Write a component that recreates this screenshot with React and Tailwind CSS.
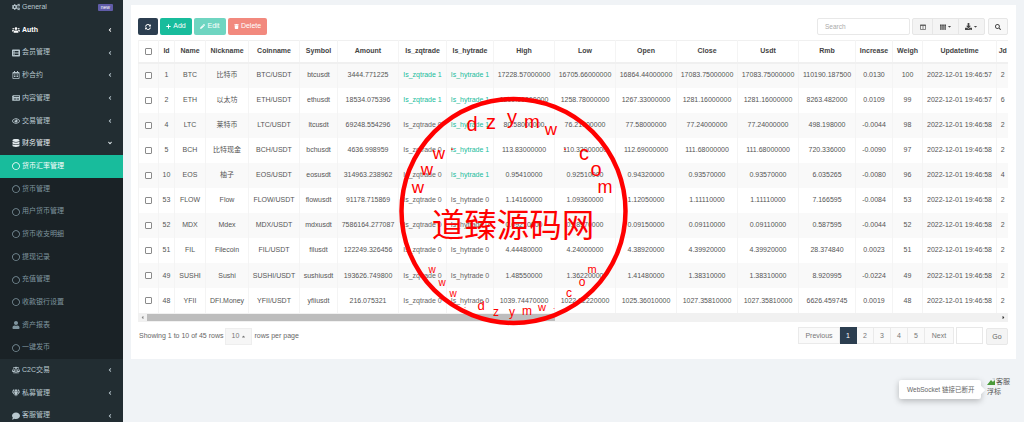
import React from 'react';
import {
  FaCogs, FaUsers, FaListAlt, FaRegCalendarAlt, FaNewspaper, FaRegEye, FaDatabase, FaRegCircle, FaUser,
  FaBalanceScale, FaGem, FaComment, FaAngleLeft, FaAngleDown, FaSyncAlt, FaPlus, FaPencilAlt, FaTrash,
  FaColumns, FaTh, FaDownload, FaSearch, FaCaretDown, FaCaretUp, FaCaretLeft, FaCaretRight,
} from 'react-icons/fa';

const font = { fontFamily: '"Liberation Sans", "Noto Sans CJK SC", sans-serif' };

const topMenu = [
  { icon: FaCogs, label: 'General', badge: 'new' },
  { icon: FaUsers, label: 'Auth', arrow: true, bold: true },
  { icon: FaListAlt, label: '会员管理', arrow: true },
  { icon: FaRegCalendarAlt, label: '秒合约', arrow: true },
  { icon: FaNewspaper, label: '内容管理', arrow: true },
  { icon: FaRegEye, label: '交易管理', arrow: true },
  { icon: FaDatabase, label: '财务管理', open: true, bright: true },
];

const subMenu = [
  { icon: FaRegCircle, label: '货币汇率管理', active: true },
  { icon: FaRegCircle, label: '货币管理' },
  { icon: FaRegCircle, label: '用户货币管理' },
  { icon: FaRegCircle, label: '货币收支明细' },
  { icon: FaRegCircle, label: '提现记录' },
  { icon: FaRegCircle, label: '充值管理' },
  { icon: FaRegCircle, label: '收款银行设置' },
  { icon: FaUser, label: '资产报表' },
  { icon: FaRegCircle, label: '一键发币' },
];

const bottomMenu = [
  { icon: FaBalanceScale, label: 'C2C交易', arrow: true },
  { icon: FaGem, label: '私募管理', arrow: true },
  { icon: FaComment, label: '客服管理', arrow: true },
];

const columns = [
  ['', 20], ['Id', 16], ['Name', 31], ['Nickname', 43], ['Coinname', 51], ['Symbol', 38], ['Amount', 61],
  ['Is_zqtrade', 48], ['Is_hytrade', 47], ['High', 61], ['Low', 61], ['Open', 61], ['Close', 61], ['Usdt', 61],
  ['Rmb', 57], ['Increase', 37], ['Weigh', 30], ['Updatetime', 74], ['Jd', 12],
];

const rows = [
  [1, 'BTC', '比特币', 'BTC/USDT', 'btcusdt', '3444.771225', 1, 1, '17228.57000000', '16705.66000000', '16864.44000000', '17083.75000000', '17083.75000000', '110190.187500', '0.0130', 100, '2022-12-01 19:46:57', 2],
  [2, 'ETH', '以太坊', 'ETH/USDT', 'ethusdt', '18534.075396', 1, 1, '1299.91000000', '1258.78000000', '1267.33000000', '1281.16000000', '1281.16000000', '8263.482000', '0.0109', 99, '2022-12-01 19:46:57', 6],
  [4, 'LTC', '莱特币', 'LTC/USDT', 'ltcusdt', '69248.554296', 0, 1, '80.58000000', '76.21000000', '77.58000000', '77.24000000', '77.24000000', '498.198000', '-0.0044', 98, '2022-12-01 19:46:58', 2],
  [5, 'BCH', '比特现金', 'BCH/USDT', 'bchusdt', '4636.998959', 0, 1, '113.83000000', '110.32000000', '112.69000000', '111.68000000', '111.68000000', '720.336000', '-0.0090', 97, '2022-12-01 19:46:58', 2],
  [10, 'EOS', '柚子', 'EOS/USDT', 'eosusdt', '314963.238962', 0, 1, '0.95410000', '0.92510000', '0.94320000', '0.93570000', '0.93570000', '6.035265', '-0.0080', 96, '2022-12-01 19:46:58', 4],
  [53, 'FLOW', 'Flow', 'FLOW/USDT', 'flowusdt', '91178.715869', 0, 0, '1.14160000', '1.09360000', '1.12050000', '1.11110000', '1.11110000', '7.166595', '-0.0084', 53, '2022-12-01 19:46:58', 2],
  [52, 'MDX', 'Mdex', 'MDX/USDT', 'mdxusdt', '7586164.277087', 0, 0, '0.09210000', '0.08970000', '0.09150000', '0.09110000', '0.09110000', '0.587595', '-0.0044', 52, '2022-12-01 19:46:58', 2],
  [51, 'FIL', 'Filecoin', 'FIL/USDT', 'filusdt', '122249.326456', 0, 0, '4.44480000', '4.24000000', '4.38920000', '4.39920000', '4.39920000', '28.374840', '0.0023', 51, '2022-12-01 19:46:58', 2],
  [49, 'SUSHI', 'Sushi', 'SUSHI/USDT', 'sushiusdt', '193626.749800', 0, 0, '1.48550000', '1.36220000', '1.41480000', '1.38310000', '1.38310000', '8.920995', '-0.0224', 49, '2022-12-01 19:46:58', 2],
  [48, 'YFII', 'DFI.Money', 'YFII/USDT', 'yfiiusdt', '216.075321', 0, 0, '1039.74470000', '1022.32220000', '1025.36010000', '1027.35810000', '1027.35810000', '6626.459745', '0.0019', 48, '2022-12-01 19:46:58', 2],
];

// stamp letters: [char, x, y, size], placed around the ring
const stampLetters = [
  ['w', 418, 193, 17], ['w', 427, 175, 17], ['w', 439, 159, 17], ['.', 452, 150, 15], ['d', 472, 131, 20],
  ['z', 491, 129, 20], ['y', 512, 124, 20], ['m', 532, 128, 19], ['w', 551, 135, 17], ['.', 565, 150, 15],
  ['c', 584, 160, 20], ['o', 596, 176, 20], ['m', 605, 193, 18],
  ['w', 432, 273, 10], ['w', 442, 286, 10], ['w', 453, 297, 10], ['.', 465, 308, 8], ['d', 481, 310, 13],
  ['z', 496, 316, 12], ['y', 512, 316, 12], ['m', 527, 315, 12], ['w', 542, 311, 11], ['.', 554, 309, 8],
  ['c', 569, 297, 12], ['o', 582, 286, 12], ['m', 592, 273, 11],
];

const MenuRow = ({ item }) => {
  const Icon = item.icon;
  return (
    <div
      className={`flex h-[22.7px] items-center pl-[10px] pr-[10px] text-[7px] ${
        item.active ? 'bg-[#18bc9c] text-white' : item.bright ? 'text-[#e4ecef]' : item.sub ? 'text-[#7f959f]' : 'text-[#b8c7ce]'
      } ${item.bold ? 'font-bold text-white' : ''}`}
    >
      <span className="flex w-[12px] justify-center">
        <Icon className="text-[8px]" />
      </span>
      <span className="flex-1 whitespace-nowrap">{item.label}</span>
      {item.badge && <span className="rounded-[1px] bg-[#605ca8] px-[3px] text-[5px] leading-[7px] text-white">{item.badge}</span>}
      {item.arrow && <FaAngleLeft className="text-[6px]" />}
      {item.open && <FaAngleDown className="text-[6px]" />}
    </div>
  );
};

const Check = () => <span className="mx-auto block h-[7px] w-[7px] rounded-[1px] border border-[#8a8a8a] bg-white" />;

const TradeCell = ({ name, on }) => (
  <span className={on ? 'text-[#18bc9c]' : 'text-[#666]'}>{name} {on}</span>
);

const Cell = ({ children }) => (
  <td className="overflow-hidden whitespace-nowrap border-l border-[#f4f4f4] p-0 text-center text-[7px] text-[#555]">{children}</td>
);

const PageBtn = ({ children, active }) => (
  <span
    className={`flex h-[17px] items-center justify-center border-y border-r text-[7px] first:border-l ${
      active ? 'w-[17px] border-[#2c3e50] bg-[#2c3e50] text-white' : 'border-[#eaeaea] bg-[#fafafa] text-[#777]'
    }`}
  >
    {children}
  </span>
);

export default function App() {
  return (
    <div style={font} className="relative flex h-[422px] w-[1024px] overflow-hidden bg-[#f0f3f6]">
      {/* sidebar */}
      <aside className="w-[123px] shrink-0 overflow-hidden bg-[#222d32]">
        <div className="-mt-[4px]">
          {topMenu.map((item) => <MenuRow key={item.label} item={item} />)}
          <div className="bg-[#1a2226]">
            {subMenu.map((item) => <MenuRow key={item.label} item={{ ...item, sub: true }} />)}
          </div>
          {bottomMenu.map((item) => <MenuRow key={item.label} item={item} />)}
        </div>
      </aside>

      {/* main */}
      <main className="flex-1 px-[8px] pt-[5px]">
        <section className="h-[354px] w-[885px] bg-white pl-[7px] pr-[8px] pt-[13px]">
          <div className="flex h-[17px] items-center">
            <button className="flex h-[17px] w-[20px] items-center justify-center rounded-[2px] bg-[#2c3e50] text-white">
              <FaSyncAlt className="text-[6px]" />
            </button>
            <button className="ml-[2px] flex h-[17px] w-[32px] items-center justify-center gap-[2px] rounded-[2px] bg-[#18bc9c] text-[7px] text-white">
              <FaPlus className="text-[5px]" />Add
            </button>
            <button className="ml-[2px] flex h-[17px] w-[32px] items-center justify-center gap-[2px] rounded-[2px] bg-[#6fd5c1] text-[7px] text-white">
              <FaPencilAlt className="text-[5px]" />Edit
            </button>
            <button className="ml-[2px] flex h-[17px] w-[39px] items-center justify-center gap-[2px] rounded-[2px] bg-[#f2897e] text-[7px] text-white">
              <FaTrash className="text-[5px]" />Delete
            </button>
            <div className="ml-auto flex h-[17px] w-[93px] items-center rounded-[2px] border border-[#e8e8e8] pl-[7px] text-[6.5px] text-[#aaa]">Search</div>
            <div className="ml-[2px] flex h-[17px] rounded-[2px] border border-[#e6e6e6] bg-[#f4f4f4] text-[#444]">
              <span className="flex w-[20px] items-center justify-center border-r border-[#e6e6e6]"><FaColumns className="text-[6px] text-[#666]" /></span>
              <span className="flex w-[26px] items-center justify-center gap-[1px] border-r border-[#e6e6e6]"><FaTh className="text-[6px]" /><FaCaretDown className="text-[5px]" /></span>
              <span className="flex w-[25px] items-center justify-center gap-[1px]"><FaDownload className="text-[7px]" /><FaCaretDown className="text-[5px]" /></span>
            </div>
            <span className="ml-[3px] flex h-[17px] w-[20px] items-center justify-center rounded-[2px] border border-[#e6e6e6] bg-[#f8f8f8] text-[#444]">
              <FaSearch className="text-[6px]" />
            </span>
          </div>

          <div className="mt-[5px] w-[870px] overflow-hidden">
            <table className="w-[870px] table-fixed border-collapse">
              <colgroup>
                {columns.map(([name, w]) => <col key={name} style={{ width: w }} />)}
              </colgroup>
              <thead>
                <tr className="h-[22px] border-b-2 border-t border-[#f0f0f0]">
                  {columns.map(([name]) => (
                    <th key={name} className="overflow-hidden whitespace-nowrap border-l border-[#f4f4f4] p-0 text-center text-[7px] font-bold text-[#444]">
                      {name || <Check />}
                    </th>
                  ))}
                </tr>
              </thead>
              <tbody>
                {rows.map((r, i) => (
                  <tr key={r[0]} className={`h-[25.1px] ${i % 2 === 0 ? 'bg-[#f9f9f9]' : 'bg-white'}`}>
                    <Cell><Check /></Cell>
                    {r.map((v, j) => (
                      <Cell key={j}>
                        {j === 6 ? <TradeCell name="Is_zqtrade" on={v} /> : j === 7 ? <TradeCell name="Is_hytrade" on={v} /> : v}
                      </Cell>
                    ))}
                  </tr>
                ))}
              </tbody>
            </table>
            {/* horizontal scrollbar */}
            <div className="flex h-[9px] items-center bg-[#f1f1f1]">
              <span className="flex w-[9px] justify-center text-[#888]"><FaCaretLeft className="text-[5px]" /></span>
              <span className="h-[7px] w-[408px] bg-[#bdbdbd]" />
              <span className="ml-auto flex w-[9px] justify-center text-[#333]"><FaCaretRight className="text-[5px]" /></span>
            </div>
          </div>

          <div className="mt-[5px] flex items-start">
            <div className="flex h-[18px] items-center text-[7px] text-[#666]">
              <span className="ml-px">Showing 1 to 10 of 45 rows</span>
              <span className="ml-[2px] flex h-[17px] w-[27px] items-center justify-center gap-[2px] border border-[#eee] bg-[#f6f6f6] text-[#777]">
                10 <FaCaretUp className="text-[5px]" />
              </span>
              <span className="ml-[2px]">rows per page</span>
            </div>
            <div className="ml-auto flex items-start">
              <div className="flex">
                <PageBtn><span className="w-[40px] text-center">Previous</span></PageBtn>
                <PageBtn active>1</PageBtn>
                <PageBtn><span className="w-[16px] text-center">2</span></PageBtn>
                <PageBtn><span className="w-[16px] text-center">3</span></PageBtn>
                <PageBtn><span className="w-[16px] text-center">4</span></PageBtn>
                <PageBtn><span className="w-[16px] text-center">5</span></PageBtn>
                <PageBtn><span className="w-[28px] text-center">Next</span></PageBtn>
              </div>
              <span className="ml-[2px] h-[17px] w-[27px] border border-[#e8e8e8] bg-white" />
              <span className="ml-[3px] mt-px flex h-[17px] w-[22px] items-center justify-center rounded-[2px] border border-[#e8e8e8] bg-[#f4f4f4] text-[7px] text-[#666]">Go</span>
            </div>
          </div>
        </section>
      </main>

      {/* websocket tooltip */}
      <div className="absolute left-[899px] top-[380px] flex h-[19px] w-[82px] items-center rounded-[2px] bg-white pl-[8px] text-[6.5px] text-[#666] shadow-[0_2px_6px_rgba(0,0,0,0.25)]">
        WebSocket 链接已断开
        <span className="absolute -right-[3px] top-[7px] h-[6px] w-[6px] rotate-45 bg-white" />
      </div>
      <div className="absolute left-[987px] top-[377px] w-[28px] text-[7px] leading-[10px] text-[#555]">
        <svg className="mr-px inline-block align-[-1px]" width="8" height="7" viewBox="0 0 8 7">
          <path d="M0 7 L4 2 L6 4 L8 1 V7 Z" fill="#4a9a3a" />
          <path d="M5 0 H8 V3 Z" fill="#cfd8dc" />
        </svg>
        客服浮标
      </div>

      {/* red stamp over the table */}
      <svg className="pointer-events-none absolute left-0 top-0" width="1024" height="422" viewBox="0 0 1024 422">
        <circle cx="513.5" cy="211" r="112" fill="none" stroke="#f00" strokeWidth="4.5" />
        <text x="513" y="237" textAnchor="middle" fontSize="32.5" fill="#f00" fontFamily='"Noto Sans CJK SC", sans-serif'>道臻源码网</text>
        {stampLetters.map(([c, x, y, s], i) => (
          <text key={i} x={x} y={y} textAnchor="middle" fontSize={s} fill="#f00" fontFamily='"Liberation Sans", sans-serif'>{c}</text>
        ))}
      </svg>
    </div>
  );
}
